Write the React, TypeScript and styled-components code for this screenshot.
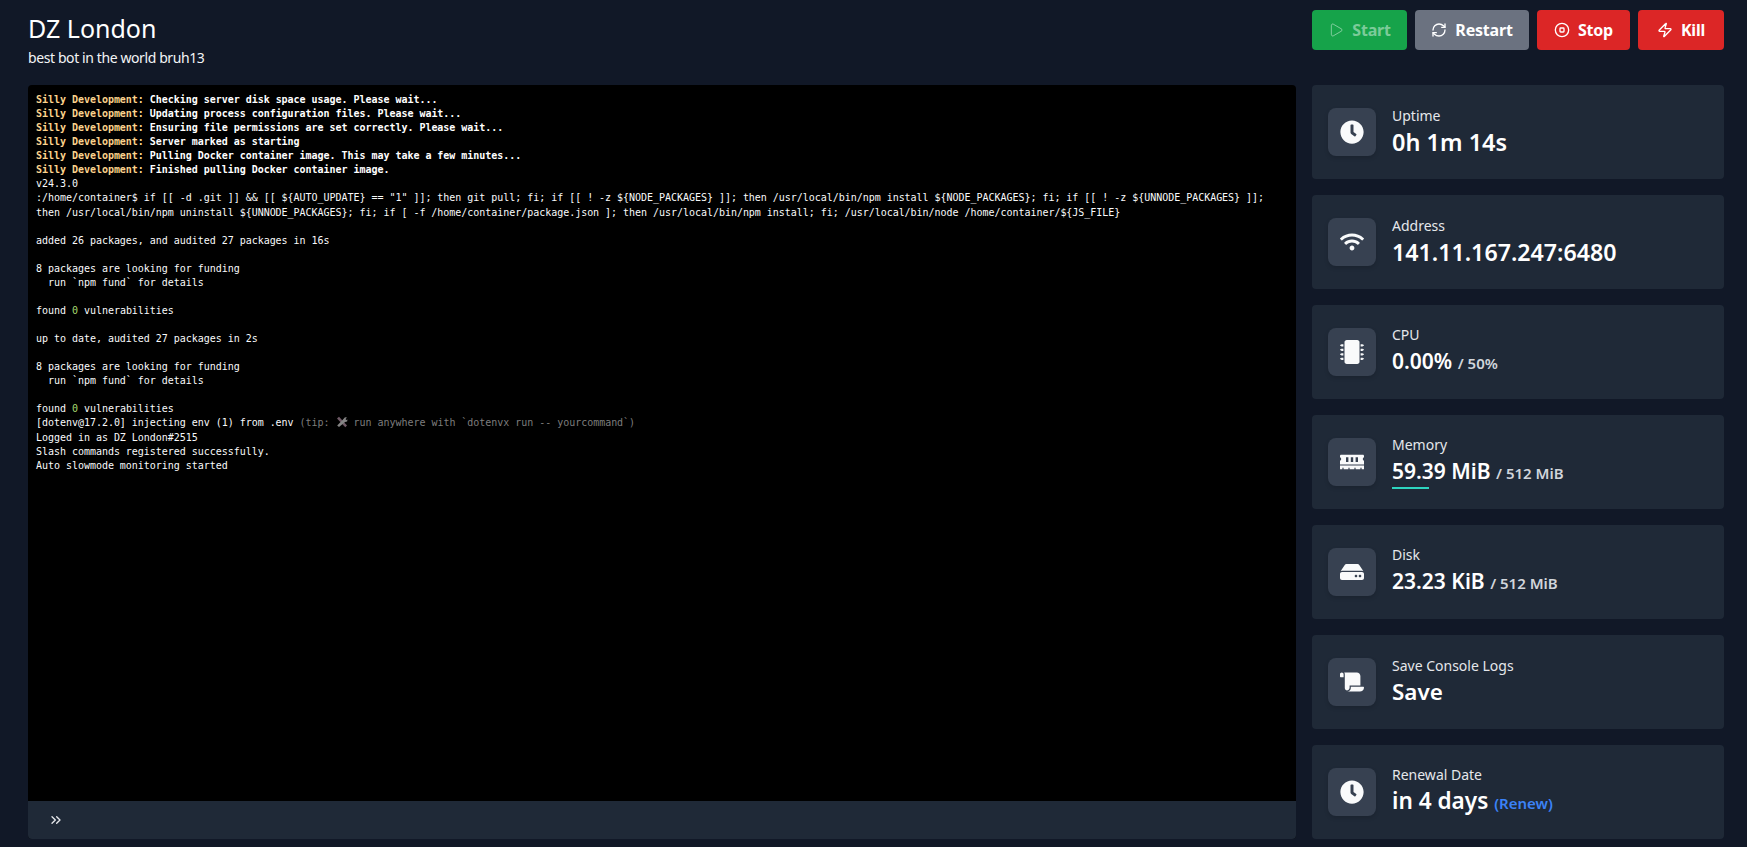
import React from "react";
import styled, { createGlobalStyle } from "styled-components";
import { Play, RefreshCw, CircleStop, Zap, ChevronsRight } from "lucide-react";
import { FaClock, FaWifi, FaMicrochip, FaMemory, FaHdd, FaScroll } from "react-icons/fa";

const GlobalStyle = createGlobalStyle`
  html, body {
    margin: 0;
    height: 100%;
    background: #111827;
    overflow: hidden;
  }
  * {
    box-sizing: border-box;
  }
`;

const Page = styled.div`
  height: 847px;
  padding: 10px 23px 8px 28px;
  display: flex;
  flex-direction: column;
  color: #fff;
  font-family: "Noto Sans", "Open Sans", sans-serif;
`;

const Header = styled.header`
  height: 75px;
  display: flex;
  justify-content: space-between;
  align-items: flex-start;
`;

const TitleBlock = styled.div`
  padding-top: 2px;
  display: flex;
  flex-direction: column;
`;

const Title = styled.h1`
  margin: 0;
  font-size: 25px;
  line-height: 32px;
  font-weight: 400;
  color: #fff;
`;

const Subtitle = styled.p`
  margin: 3px 0 0;
  font-size: 14px;
  line-height: 22px;
  letter-spacing: -0.4px;
  color: #f3f4f6;
`;

const Actions = styled.div`
  display: flex;
  gap: 8px;
  width: 412px;
`;

const ActionButton = styled.button<{ $bg: string; $width: number; $dim?: boolean }>`
  width: ${(p) => p.$width}px;
  height: 40px;
  display: flex;
  align-items: center;
  justify-content: center;
  gap: 8px;
  border: 0;
  border-radius: 4px;
  padding: 0;
  background: ${(p) => p.$bg};
  color: ${(p) => (p.$dim ? "rgba(255,255,255,0.45)" : "#fff")};
  font-family: inherit;
  font-size: 16px;
  letter-spacing: -0.2px;
  font-weight: 700;
`;

const Main = styled.main`
  flex: 1;
  min-height: 0;
  display: flex;
  gap: 16px;
`;

const ConsolePanel = styled.section`
  flex: 1;
  min-width: 0;
  display: flex;
  flex-direction: column;
  border-radius: 4px;
  overflow: hidden;
  background: #000;
`;

const ConsoleOutput = styled.pre`
  flex: 1;
  margin: 0;
  padding: 8px;
  font-family: "DejaVu Sans Mono", "Liberation Mono", monospace;
  font-size: 10px;
  line-height: 14.07px;
  letter-spacing: -0.03px;
  white-space: pre-wrap;
  color: #f9fafb;
`;

const Daemon = styled.span`
  font-weight: 700;
  color: #fcd38d;
`;

const BoldLine = styled.span`
  font-weight: 700;
  color: #fff;
`;

const Green = styled.span`
  color: #a7d96f;
`;

const Dim = styled.span`
  color: #7d7d7d;
`;

const ToolGlyph = styled.svg`
  display: inline-block;
  width: 12px;
  height: 12px;
  vertical-align: -2px;
`;

const ConsoleInput = styled.div`
  height: 38px;
  padding-left: 20px;
  display: flex;
  align-items: center;
  background: #1f2937;
  color: #e5e7eb;
`;

const Sidebar = styled.aside`
  width: 412px;
  flex-shrink: 0;
  display: flex;
  flex-direction: column;
  gap: 16px;
`;

const Card = styled.div`
  height: 94px;
  padding: 0 16px;
  display: flex;
  align-items: center;
  gap: 16px;
  border-radius: 4px;
  background: #1f2937;
`;

const IconBox = styled.div`
  width: 48px;
  height: 48px;
  flex-shrink: 0;
  display: flex;
  align-items: center;
  justify-content: center;
  border-radius: 8px;
  background: #374151;
  box-shadow: 0 2px 4px rgba(0, 0, 0, 0.15);
  color: #f9fafb;
  font-size: 24px;
`;

const CardBody = styled.div`
  flex: 1;
  min-width: 0;
  position: relative;
  display: flex;
  flex-direction: column;
  gap: 2px;
  padding-bottom: 2px;
`;

const Label = styled.div`
  font-size: 14px;
  line-height: 20px;
  color: #e5e7eb;
`;

const Value = styled.div<{ $size: number }>`
  font-size: ${(p) => p.$size}px;
  line-height: 28px;
  font-weight: 600;
  color: #fff;
  white-space: nowrap;
`;

const Limit = styled.span`
  font-size: 15px;
  font-weight: 600;
  color: #d1d5db;
`;

const RenewLink = styled.a`
  font-size: 15px;
  font-weight: 600;
  color: #3b82f6;
`;

const UsageBar = styled.div`
  position: absolute;
  left: 0;
  bottom: 0;
  height: 2px;
  background: #2dd4bf;
`;

const daemonLines = [
  "Checking server disk space usage. Please wait...",
  "Updating process configuration files. Please wait...",
  "Ensuring file permissions are set correctly. Please wait...",
  "Server marked as starting",
  "Pulling Docker container image. This may take a few minutes...",
  "Finished pulling Docker container image.",
];

const startupCommand =
  ':/home/container$ if [[ -d .git ]] && [[ ${AUTO_UPDATE} == "1" ]]; then git pull; fi; if [[ ! -z ${NODE_PACKAGES} ]]; then /usr/local/bin/npm install ${NODE_PACKAGES}; fi; if [[ ! -z ${UNNODE_PACKAGES} ]]; then /usr/local/bin/npm uninstall ${UNNODE_PACKAGES}; fi; if [ -f /home/container/package.json ]; then /usr/local/bin/npm install; fi; /usr/local/bin/node /home/container/${JS_FILE}';

export default function App() {
  const memoryPercent = (59.39 / 512) * 100;

  return (
    <Page>
      <GlobalStyle />
      <Header>
        <TitleBlock>
          <Title>DZ London</Title>
          <Subtitle>best bot in the world bruh13</Subtitle>
        </TitleBlock>
        <Actions>
          <ActionButton $bg="#16a34a" $width={95} $dim>
            <Play size={16} strokeWidth={1.5} />
            Start
          </ActionButton>
          <ActionButton $bg="#6b7280" $width={114}>
            <RefreshCw size={16} strokeWidth={2} />
            Restart
          </ActionButton>
          <ActionButton $bg="#dc2626" $width={93}>
            <CircleStop size={16} strokeWidth={2} />
            Stop
          </ActionButton>
          <ActionButton $bg="#dc2626" $width={86}>
            <Zap size={16} strokeWidth={2} />
            Kill
          </ActionButton>
        </Actions>
      </Header>

      <Main>
        <ConsolePanel>
          <ConsoleOutput>
            {daemonLines.map((line) => (
              <React.Fragment key={line}>
                <Daemon>Silly Development: </Daemon>
                <BoldLine>{line}</BoldLine>
                {"\n"}
              </React.Fragment>
            ))}
            {"v24.3.0\n"}
            {startupCommand}
            {"\n\nadded 26 packages, and audited 27 packages in 16s\n\n8 packages are looking for funding\n  run `npm fund` for details\n\nfound "}
            <Green>0</Green>
            {" vulnerabilities\n\nup to date, audited 27 packages in 2s\n\n8 packages are looking for funding\n  run `npm fund` for details\n\nfound "}
            <Green>0</Green>
            {" vulnerabilities\n[dotenv@17.2.0] injecting env (1) from .env "}
            <Dim>
              {"(tip: "}
              <ToolGlyph viewBox="0 0 12 12">
                <path d="M1 2.5 3 .8l8 8.7-1.7 1.7z" fill="#6f5a66" />
                <path d="M7.2 3.2 9 1.2l2 .3-1.4 1.6.5.9 1.4-.6-.4 2-2 .5L3 11 1.2 9.4 6.6 4z" fill="#858585" />
              </ToolGlyph>
              {" run anywhere with `dotenvx run -- yourcommand`)"}
            </Dim>
            {"\nLogged in as DZ London#2515\nSlash commands registered successfully.\nAuto slowmode monitoring started"}
          </ConsoleOutput>
          <ConsoleInput>
            <ChevronsRight size={16} />
          </ConsoleInput>
        </ConsolePanel>

        <Sidebar>
          <Card>
            <IconBox>
              <FaClock />
            </IconBox>
            <CardBody>
              <Label>Uptime</Label>
              <Value $size={23.5}>0h 1m 14s</Value>
            </CardBody>
          </Card>
          <Card>
            <IconBox>
              <FaWifi />
            </IconBox>
            <CardBody>
              <Label>Address</Label>
              <Value $size={23.2}>141.11.167.247:6480</Value>
            </CardBody>
          </Card>
          <Card>
            <IconBox>
              <FaMicrochip />
            </IconBox>
            <CardBody>
              <Label>CPU</Label>
              <Value $size={21}>
                0.00% <Limit>/ 50%</Limit>
              </Value>
            </CardBody>
          </Card>
          <Card>
            <IconBox>
              <FaMemory />
            </IconBox>
            <CardBody>
              <Label>Memory</Label>
              <Value $size={21}>
                59.39 MiB <Limit>/ 512 MiB</Limit>
              </Value>
              <UsageBar style={{ width: `${memoryPercent}%` }} />
            </CardBody>
          </Card>
          <Card>
            <IconBox>
              <FaHdd />
            </IconBox>
            <CardBody>
              <Label>Disk</Label>
              <Value $size={21}>
                23.23 KiB <Limit>/ 512 MiB</Limit>
              </Value>
            </CardBody>
          </Card>
          <Card>
            <IconBox>
              <FaScroll />
            </IconBox>
            <CardBody>
              <Label>Save Console Logs</Label>
              <Value $size={22.4}>Save</Value>
            </CardBody>
          </Card>
          <Card>
            <IconBox>
              <FaClock />
            </IconBox>
            <CardBody>
              <Label>Renewal Date</Label>
              <Value $size={22.6}>
                in 4 days <RenewLink>(Renew)</RenewLink>
              </Value>
            </CardBody>
          </Card>
        </Sidebar>
      </Main>
    </Page>
  );
}
